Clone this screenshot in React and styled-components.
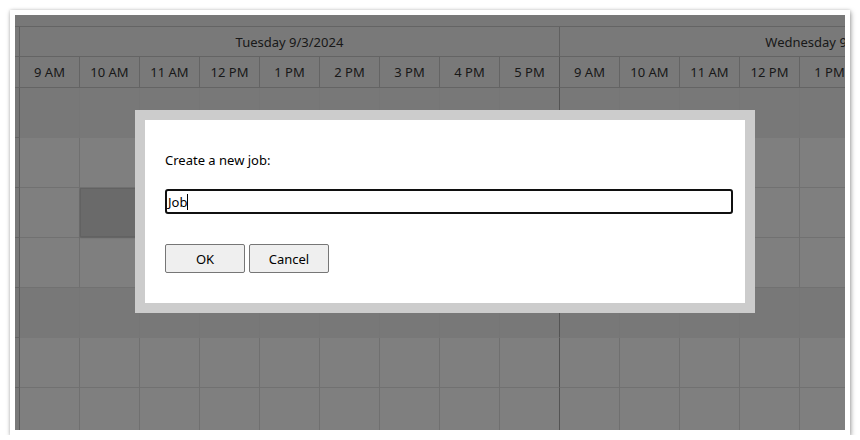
import React from 'react'
import styled, { createGlobalStyle } from 'styled-components'

const GlobalStyle = createGlobalStyle`
  html, body {
    margin: 0;
    padding: 0;
    background: #fff;
  }
  body {
    font-family: "Noto Sans", "Open Sans", sans-serif;
    font-size: 13px;
    color: #333;
  }
`

const days = ['Tuesday 9/3/2024', 'Wednesday 9/4/2024']
const hours = ['9 AM', '10 AM', '11 AM', '12 PM', '1 PM', '2 PM', '3 PM', '4 PM', '5 PM']
const rows = ['group', 'cell', 'cell', 'cell', 'group', 'cell', 'cell']

const App = () => (
  <>
    <GlobalStyle />
    <Frame>
      <Scheduler>
        <TopBar />
        <Row>
          <Corner />
          {days.map(d => (
            <DayHeader key={d}>{d}</DayHeader>
          ))}
        </Row>
        <Row>
          <Corner />
          {days.map(d =>
            hours.map((h, i) => (
              <HourHeader key={d + h} $last={i === hours.length - 1}>
                {h}
              </HourHeader>
            ))
          )}
        </Row>
        {rows.map((kind, r) => (
          <Row key={r}>
            <RowHead $group={kind === 'group'} />
            {days.map(d =>
              hours.map((h, i) => (
                <Cell key={d + h} $group={kind === 'group'} $last={i === hours.length - 1}>
                  {r === 2 && d === days[0] && i === 1 && <Selection />}
                </Cell>
              ))
            )}
          </Row>
        ))}
        <Overlay />
        <Modal>
          <ModalBody>
            <Prompt>Create a new job:</Prompt>
            <Field>
              <FieldValue>Job</FieldValue>
              <Caret />
            </Field>
            <Buttons>
              <Button>OK</Button>
              <Button>Cancel</Button>
            </Buttons>
          </ModalBody>
        </Modal>
      </Scheduler>
    </Frame>
  </>
)

const Frame = styled.div`
  margin: 10px 0 0 10px;
  width: 830px;
  height: 415px;
  padding: 5px;
  background: #fff;
  box-shadow: 1px 2px 5px rgba(0, 0, 0, 0.35), 0 0 3px rgba(0, 0, 0, 0.15);
`

const Scheduler = styled.div`
  position: relative;
  width: 830px;
  height: 415px;
  overflow: hidden;
  background: #fff;
  display: flex;
  flex-direction: column;
`

const TopBar = styled.div`
  flex: none;
  height: 11px;
  background: #f0f0f0;
  border-bottom: 1px solid #c8c8c8;
`

const Row = styled.div`
  flex: none;
  display: flex;
`

const Corner = styled.div`
  flex: none;
  width: 4px;
  background: #f3f3f3;
  border-right: 1px solid #c0c0c0;
  border-bottom: 1px solid #c8c8c8;
`

const DayHeader = styled.div`
  flex: none;
  width: 539px;
  height: 29px;
  display: flex;
  align-items: center;
  justify-content: center;
  background: #f3f3f3;
  border-right: 1px solid #c0c0c0;
  border-bottom: 1px solid #c8c8c8;
  color: #333;
`

const HourHeader = styled.div`
  flex: none;
  width: 59px;
  height: 30px;
  display: flex;
  align-items: center;
  justify-content: center;
  background: #f3f3f3;
  border-right: 1px solid ${p => (p.$last ? '#b0b0b0' : '#c8c8c8')};
  border-bottom: 1px solid #c8c8c8;
  color: #333;
`

const RowHead = styled.div`
  flex: none;
  width: 4px;
  height: 49px;
  background: ${p => (p.$group ? '#ececec' : '#f3f3f3')};
  border-right: 1px solid #b8b8b8;
  border-bottom: 1px solid #c8c8c8;
`

const Cell = styled.div`
  position: relative;
  flex: none;
  width: 59px;
  height: 49px;
  background: ${p => (p.$group ? '#f0f0f0' : '#fefefe')};
  border-right: 1px solid
    ${p => (p.$last ? '#a8a8a8' : p.$group ? '#ececec' : '#e0e0e0')};
  border-bottom: 1px solid ${p => (p.$group ? '#f0f0f0' : '#e2e2e2')};
`

const Selection = styled.div`
  position: absolute;
  left: 0;
  top: 0;
  width: 80px;
  height: 47px;
  background: #d4d4d4;
  border: 1px solid #c4c4c4;
  box-shadow: 0 1px 2px rgba(0, 0, 0, 0.15);
  z-index: 1;
`

const Overlay = styled.div`
  position: absolute;
  inset: 0;
  background: rgba(0, 0, 0, 0.5);
  z-index: 2;
`

const Modal = styled.div`
  position: absolute;
  left: 120px;
  top: 95px;
  width: 600px;
  border: 10px solid #cccccc;
  background: #fff;
  z-index: 3;
`

const ModalBody = styled.div`
  display: flex;
  flex-direction: column;
  align-items: flex-start;
  padding: 31px 20px 30px;
`

const Prompt = styled.div`
  height: 18px;
  line-height: 18px;
  color: #000;
`

const Field = styled.div`
  box-sizing: border-box;
  margin-top: 20px;
  width: 568px;
  height: 25px;
  padding: 0 1px;
  display: flex;
  align-items: center;
  border: 2px solid #101010;
  border-radius: 3px;
  color: #000;
`

const FieldValue = styled.span`
  line-height: 18px;
`

const Caret = styled.span`
  width: 1px;
  height: 16px;
  background: #000;
`

const Buttons = styled.div`
  margin-top: 30px;
  display: flex;
  gap: 4px;
`

const Button = styled.button`
  box-sizing: border-box;
  width: 80px;
  height: 29px;
  padding: 0;
  font: inherit;
  color: #000;
  background: #efefef;
  border: 1px solid #767676;
  border-radius: 2px;
`

export default App
